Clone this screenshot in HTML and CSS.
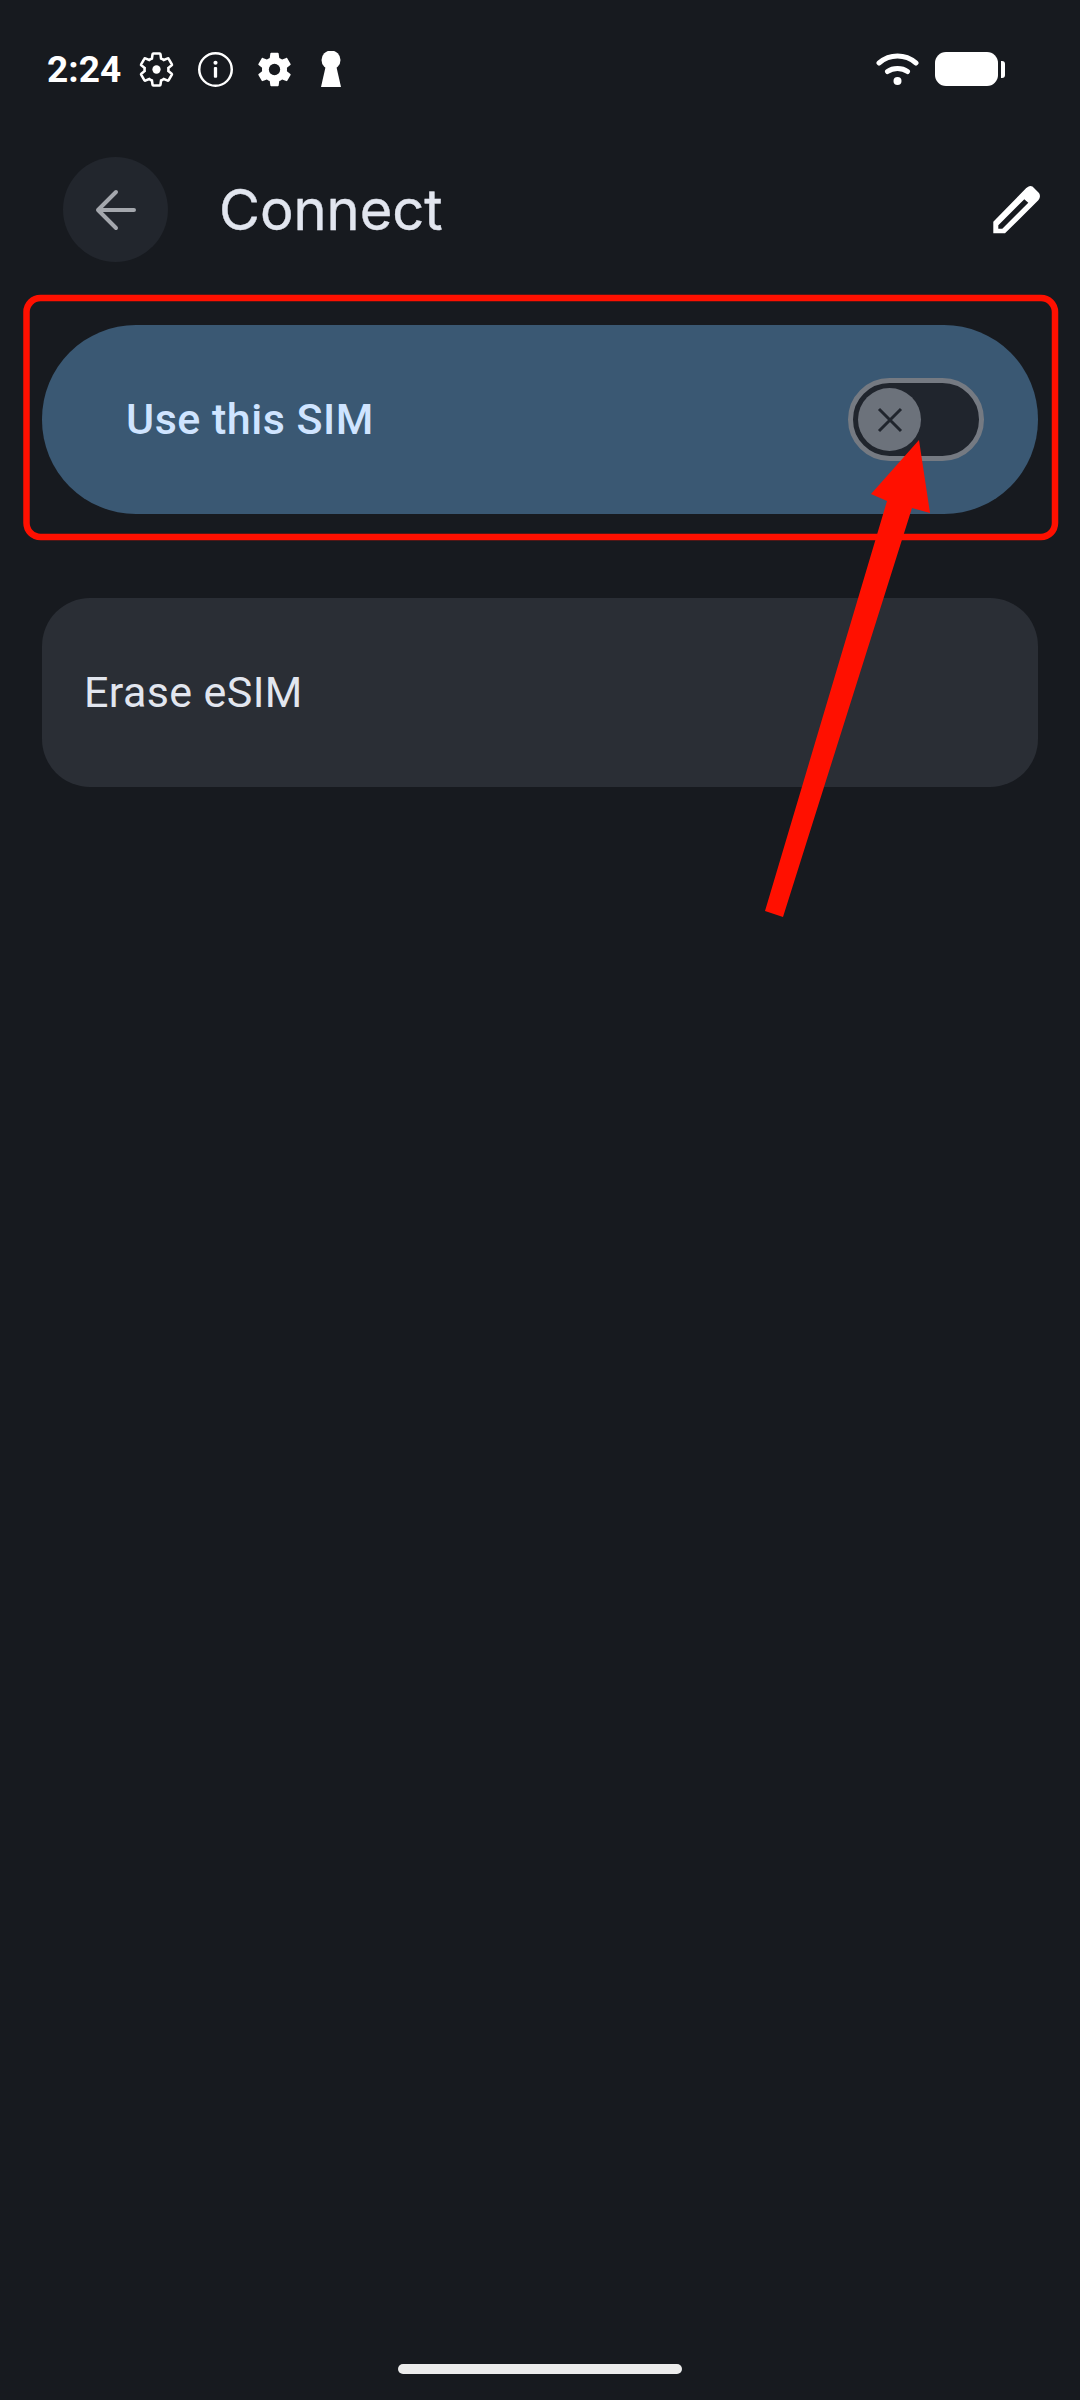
FILE: index.html

```html
<!DOCTYPE html>
<html lang="en">
<head>
    <meta charset="UTF-8">
    <title>Connect</title>
    <link rel="stylesheet" href="styles.css">
</head>
<body>
    <svg width="0" height="0" class="defs">
        <symbol id="gearShape" viewBox="0 0 24 24">
            <path d="M19.43 12.98c.04-.32.07-.64.07-.98s-.03-.66-.07-.98l2.11-1.65c.19-.15.24-.42.12-.64l-2-3.46c-.12-.22-.39-.3-.61-.22l-2.49 1c-.52-.4-1.08-.73-1.69-.98l-.38-2.65C14.46 2.18 14.25 2 14 2h-4c-.25 0-.46.18-.49.42l-.38 2.65c-.61.25-1.17.59-1.69.98l-2.49-1c-.23-.09-.49 0-.61.22l-2 3.46c-.13.22-.07.49.12.64l2.11 1.65c-.04.32-.07.65-.07.98s.03.66.07.98l-2.11 1.65c-.19.15-.24.42-.12.64l2 3.46c.12.22.39.3.61.22l2.49-1c.52.4 1.08.73 1.69.98l.38 2.65c.03.24.24.42.49.42h4c.25 0 .46-.18.49-.42l.38-2.65c.61-.25 1.17-.59 1.69-.98l2.49 1c.23.09.49 0 .61-.22l2-3.46c.12-.22.07-.49-.12-.64l-2.11-1.65z"/>
        </symbol>
    </svg>

    <div class="status-bar">
        <span class="time">2:24</span>
        <div class="status-icons">
            <svg class="status-icon" viewBox="1 1 22 22">
                <use href="#gearShape" width="24" height="24" class="gear-outline"/>
                <circle cx="12" cy="12" r="2.600" fill="#fff"/>
            </svg>
            <svg class="status-icon" viewBox="0 0 34 34">
                <circle cx="17" cy="17" r="15.800" fill="none" stroke="#fff" stroke-width="2.400"/>
                <circle cx="17" cy="10.500" r="2" fill="#fff"/>
                <rect x="15.400" y="14.500" width="3.200" height="10.500" rx="1" fill="#fff"/>
            </svg>
            <svg class="status-icon" viewBox="1.500 1.500 21 21">
                <use href="#gearShape" width="24" height="24" fill="#fff"/>
                <circle cx="12" cy="12" r="3.400" fill="#171a1f"/>
            </svg>
            <svg class="keyhole" viewBox="0 0 20 36">
                <circle cx="10" cy="9" r="9.500" fill="#fff"/>
                <path d="M5 14h10l5 22H0z" fill="#fff"/>
            </svg>
        </div>
        <div class="status-right">
            <svg class="wifi" viewBox="0 0 44 32">
                <path d="M3 10C14 .8 29 .8 40 10" fill="none" stroke="#fff" stroke-width="5" stroke-linecap="round"/>
                <path d="M11.500 18.500C17 14.500 26 14.500 31.500 18.500" fill="none" stroke="#fff" stroke-width="5" stroke-linecap="round"/>
                <circle cx="21.500" cy="28" r="4" fill="#fff"/>
            </svg>
            <div class="battery"></div>
            <div class="battery-tip"></div>
        </div>
    </div>

    <div class="app-header">
        <button class="back-btn">
            <svg width="42" height="42" viewBox="0 0 42 42">
                <path d="M39 21H3M21 3 3 21l18 18" fill="none" stroke="#a4a7ad" stroke-width="4" stroke-linecap="round" stroke-linejoin="round"/>
            </svg>
        </button>
        <h1 class="page-title">Connect</h1>
        <svg class="edit-icon" viewBox="0 0 50 50">
            <path fill-rule="evenodd" fill="#fff" d="M1.300 36.700 34 3.300C36 1 38.500.2 40.500 1.500L47 8c1.500 2 1.200 5-.7 7.300L13 48.300H1.300zM6.300 40.300 32.300 14.300 36.300 17.700 10.300 43.700H6.300z"/>
        </svg>
    </div>

    <main class="settings">
        <div class="sim-card">
            <span class="sim-label">Use this SIM</span>
            <div class="toggle">
                <div class="toggle-thumb">
                    <svg width="26" height="26" viewBox="0 0 26 26">
                        <path d="M2 2l22 22M24 2 2 24" stroke="#20252d" stroke-width="3"/>
                    </svg>
                </div>
            </div>
        </div>
        <div class="erase-card">Erase eSIM</div>
    </main>

    <div class="home-bar"></div>

    <!-- red markup drawn on top of the screenshot -->
    <svg class="markup" viewBox="0 0 1080 2400">
        <rect x="26.500" y="298" width="1028.500" height="239" rx="14" fill="none" stroke="#ff1000" stroke-width="6.500"/>
        <polygon points="765,911 783,917 912,508 930,513 919,440 871,494 887,501" fill="#ff1000"/>
    </svg>
</body>
</html>
```

FILE: styles.css

```css
* {
    box-sizing: border-box;
}

body {
    margin: 0;
    width: 1080px;
    height: 2400px;
    background-color: #171a1f;
    font-family: Roboto, "Liberation Sans", sans-serif;
    display: flex;
    flex-direction: column;
    position: relative;
    overflow: hidden;
}

.defs {
    position: absolute;
}

.status-bar {
    height: 138px;
    padding: 0 75px 0 47px;
    display: flex;
    align-items: center;
    color: #ffffff;
}

.time {
    font-size: 37px;
    font-weight: 700;
    margin-right: 18px;
}

.status-icons {
    display: flex;
    align-items: center;
    gap: 24px;
}

.status-icon {
    width: 35px;
    height: 35px;
}

.gear-outline {
    fill: none;
    stroke: #ffffff;
    stroke-width: 1.6;
}

.keyhole {
    width: 20px;
    height: 36px;
    margin-left: 5px;
}

.status-right {
    margin-left: auto;
    display: flex;
    align-items: center;
}

.wifi {
    width: 44px;
    height: 32px;
    margin-right: 15px;
}

.battery {
    width: 63px;
    height: 34px;
    border-radius: 11px;
    background-color: #ffffff;
}

.battery-tip {
    width: 4px;
    height: 17px;
    margin-left: 3px;
    border-radius: 0 3px 3px 0;
    background-color: #ffffff;
}

.app-header {
    margin-top: 19px;
    height: 105px;
    padding: 0 38px 0 63px;
    display: flex;
    align-items: center;
}

.back-btn {
    width: 105px;
    height: 105px;
    padding: 0;
    border: none;
    border-radius: 50%;
    background-color: #22262d;
    display: flex;
    align-items: center;
    justify-content: center;
}

.page-title {
    margin: 0 0 0 51px;
    font-family: Inter, sans-serif;
    font-size: 56px;
    font-weight: 400;
    color: #e2e6ef;
    -webkit-text-stroke: 0.4px #e2e6ef;
}

.edit-icon {
    width: 50px;
    height: 50px;
    margin-left: auto;
}

.settings {
    flex: 1;
    padding: 63px 42px 0 42px;
    display: flex;
    flex-direction: column;
    gap: 84px;
}

.sim-card {
    height: 189px;
    padding: 0 54px 0 84px;
    border-radius: 94px;
    background-color: #3a5873;
    display: flex;
    align-items: center;
    justify-content: space-between;
}

.sim-label {
    margin-bottom: 2px;
    font-size: 43px;
    font-weight: 500;
    letter-spacing: 0.5px;
    color: #cfe4ff;
}

.toggle {
    width: 136px;
    height: 83px;
    padding: 5px;
    border: 5px solid #757a82;
    border-radius: 42px;
    background-color: #20252d;
}

.toggle-thumb {
    width: 63px;
    height: 63px;
    border-radius: 50%;
    background-color: #6c727b;
    display: flex;
    align-items: center;
    justify-content: center;
}

.erase-card {
    height: 189px;
    padding: 0 0 2px 42px;
    border-radius: 48px;
    background-color: #2a2e35;
    display: flex;
    align-items: center;
    font-size: 43px;
    letter-spacing: 0.4px;
    color: #e2e6ef;
}

.home-bar {
    width: 284px;
    height: 10px;
    margin: 0 0 26px 398px;
    border-radius: 5px;
    background-color: #ececec;
}

.markup {
    position: absolute;
    left: 0;
    top: 0;
    width: 1080px;
    height: 2400px;
}
```
